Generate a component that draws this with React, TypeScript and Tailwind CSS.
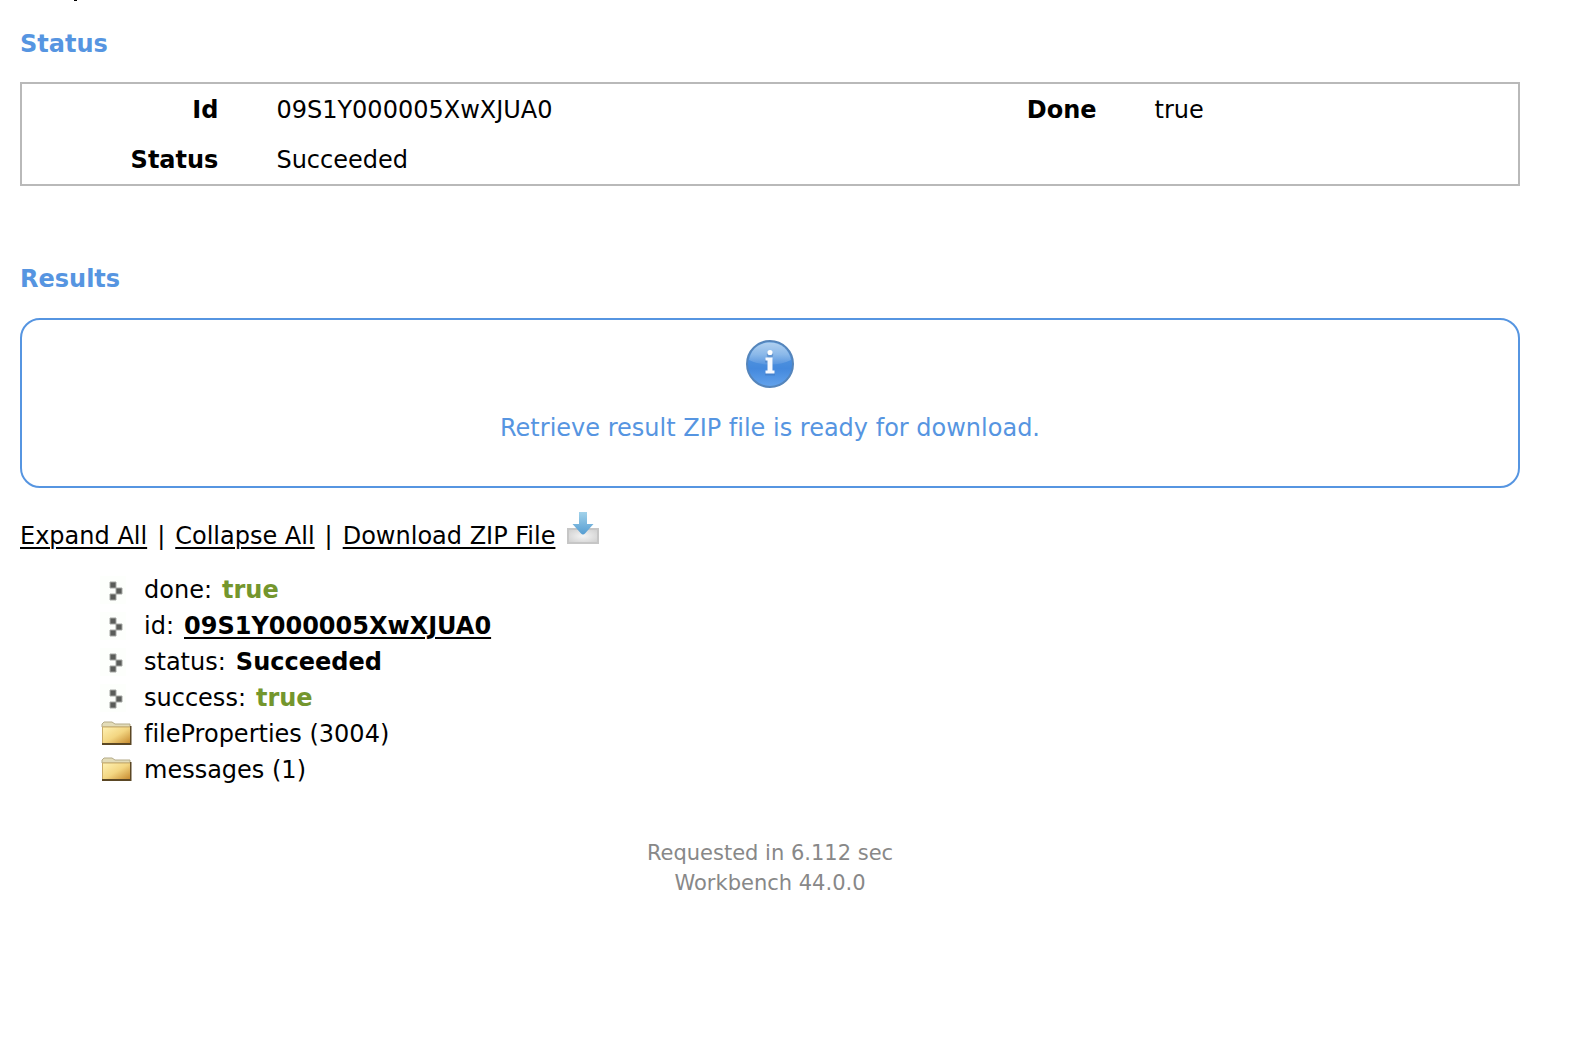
import React from "react";

function InfoIcon() {
  return (
    <svg width="48" height="48" viewBox="0 0 48 48" aria-hidden="true">
      <defs>
        <linearGradient id="info-body" x1="0" y1="0" x2="0" y2="1">
          <stop offset="0" stopColor="#5f9fdf" />
          <stop offset="0.6" stopColor="#4489dd" />
          <stop offset="1" stopColor="#64a3ec" />
        </linearGradient>
        <linearGradient id="info-gloss" x1="0" y1="0" x2="0" y2="1">
          <stop offset="0" stopColor="#b0d0f0" />
          <stop offset="0.55" stopColor="#8ab8e9" />
          <stop offset="1" stopColor="#5896e0" />
        </linearGradient>
      </defs>
      <circle cx="24" cy="24" r="23" fill="url(#info-body)" stroke="#5585bb" strokeWidth="2" />
      <path d="M3 20C5 9 13 2.500 24 2.500S43 9 45 20C33 26 15 26 3 20Z" fill="url(#info-gloss)" />
      <g fill="#3a72b8" opacity=".45" transform="translate(0 1.500)">
        <circle cx="24" cy="13" r="3.200" />
        <path d="M19 18h7.500v13h2.500v3H19v-3h2.500V21H19z" />
      </g>
      <circle cx="24" cy="12.500" r="2.600" fill="#fff" />
      <path d="M19.500 17.500h7v13h2v3h-9v-3h2v-10h-2z" fill="#f7faff" />
    </svg>
  );
}

function DownloadIcon() {
  return (
    <svg width="32" height="32" viewBox="0 0 32 32" aria-hidden="true">
      <defs>
        <linearGradient id="dl-arrow" x1="0" y1="0" x2="0" y2="1">
          <stop offset="0" stopColor="#a2d2ea" />
          <stop offset="1" stopColor="#559dd2" />
        </linearGradient>
        <radialGradient id="dl-tray" cx="0.5" cy="0.5" r="0.6">
          <stop offset="0" stopColor="#f4f4f4" />
          <stop offset="1" stopColor="#d2d2d2" />
        </radialGradient>
      </defs>
      <path d="M1 17h30v14H1z" fill="url(#dl-tray)" stroke="#c6c6c6" strokeWidth="2" />
      <path d="M12 0h8v12h6.500L18 21.500q-2 2-4 0L5.500 12H12z" fill="url(#dl-arrow)" />
    </svg>
  );
}

function BulletIcon() {
  return (
    <svg width="32" height="28" viewBox="0 0 32 28" aria-hidden="true">
      <path d="M0 0h26v28H0z" fill="#fdfffc" />
      <path d="M10 6h6v6h-6zM16 12h6v6h-6zM10 18h6v6h-6z" fill="#5a5c59" stroke="#a5a7a4" strokeWidth="1" />
    </svg>
  );
}

function FolderIcon() {
  return (
    <svg width="32" height="28" viewBox="0 0 32 28" aria-hidden="true">
      <defs>
        <linearGradient id="folder-face" x1="0" y1="0" x2="1" y2="1">
          <stop offset="0" stopColor="#fff2b4" />
          <stop offset="0.5" stopColor="#f3d682" />
          <stop offset="1" stopColor="#c4862a" />
        </linearGradient>
      </defs>
      <path d="M2 7V4l2-2h8l3 2h15v3z" fill="#e3dcb8" stroke="#b5ab88" strokeWidth="1" />
      <path d="M2.500 7h28v17h-28z" fill="url(#folder-face)" stroke="#c9ab68" strokeWidth="1" />
      <path d="M30 6h1.500v19H2v-2h28z" fill="#5b4724" />
    </svg>
  );
}

function SectionTitle({ children }: { children: React.ReactNode }) {
  return <h2 className="font-bold text-[#5695e1]">{children}</h2>;
}

function TextLink({ href, children }: { href: string; children: React.ReactNode }) {
  return (
    <a href={href} className="underline decoration-2 underline-offset-[3px]">
      {children}
    </a>
  );
}

function TreeItem({ folder, children }: { folder?: boolean; children: React.ReactNode }) {
  return (
    <li className="flex h-9 items-center gap-3">
      {folder ? <FolderIcon /> : <BulletIcon />}
      <div className="flex gap-[10px]">{children}</div>
    </li>
  );
}

export default function App() {
  return (
    <main className="bg-white pl-5 pr-[66px] font-['DejaVu_Sans',sans-serif] text-[24px] leading-[30px] text-black [font-variant-ligatures:none]">
      {/* Tail of the line scrolled above the viewport */}
      <div aria-hidden="true" className="mb-7 ml-[54px] h-px w-[3px] bg-black" />

      <SectionTitle>Status</SectionTitle>

      <table className="mt-[23px] w-full table-fixed border-separate border-spacing-0 border-2 border-[#b9b9b9]">
        <colgroup>
          <col className="w-[15%]" />
          <col className="w-[43.7%]" />
          <col className="w-[15%]" />
          <col className="w-[26.3%]" />
        </colgroup>
        <tbody>
          <tr className="h-[50px]">
            <th scope="row" className="pr-7 pt-[2px] text-right font-bold">Id</th>
            <td className="pl-[30px] pt-[2px]">09S1Y000005XwXJUA0</td>
            <th scope="row" className="pr-7 pt-[2px] text-right font-bold">Done</th>
            <td className="pl-[30px] pt-[2px]">true</td>
          </tr>
          <tr className="h-[50px]">
            <th scope="row" className="pr-7 pt-[2px] text-right font-bold">Status</th>
            <td className="pl-[30px] pt-[2px]">Succeeded</td>
            <td />
            <td />
          </tr>
        </tbody>
      </table>

      <div className="mt-[78px]">
        <SectionTitle>Results</SectionTitle>
      </div>

      <div className="mt-6 flex flex-col items-center rounded-[20px] border-2 border-[#5695e1] pb-[43px] pt-5 text-[#5695e1]">
        <InfoIcon />
        <p className="mt-[25px]">Retrieve result ZIP file is ready for download.</p>
      </div>

      <nav className="mt-6 flex items-start gap-3">
        <div className="flex gap-[10px] pt-[9px]">
          <TextLink href="#expand">Expand All</TextLink>
          <span>|</span>
          <TextLink href="#collapse">Collapse All</TextLink>
          <span>|</span>
          <TextLink href="#download">Download ZIP File</TextLink>
        </div>
        <DownloadIcon />
      </nav>

      <ul className="mt-[21px] pl-20">
        <TreeItem>
          <span>done:</span>
          <b className="text-[#74962d]">true</b>
        </TreeItem>
        <TreeItem>
          <span>id:</span>
          <b><TextLink href="#id">09S1Y000005XwXJUA0</TextLink></b>
        </TreeItem>
        <TreeItem>
          <span>status:</span>
          <b>Succeeded</b>
        </TreeItem>
        <TreeItem>
          <span>success:</span>
          <b className="text-[#74962d]">true</b>
        </TreeItem>
        <TreeItem folder>fileProperties (3004)</TreeItem>
        <TreeItem folder>messages (1)</TreeItem>
      </ul>

      <footer className="mt-[50px] text-center text-[21px] text-[#888]">
        <p>Requested in 6.112 sec</p>
        <p>Workbench 44.0.0</p>
      </footer>
    </main>
  );
}
